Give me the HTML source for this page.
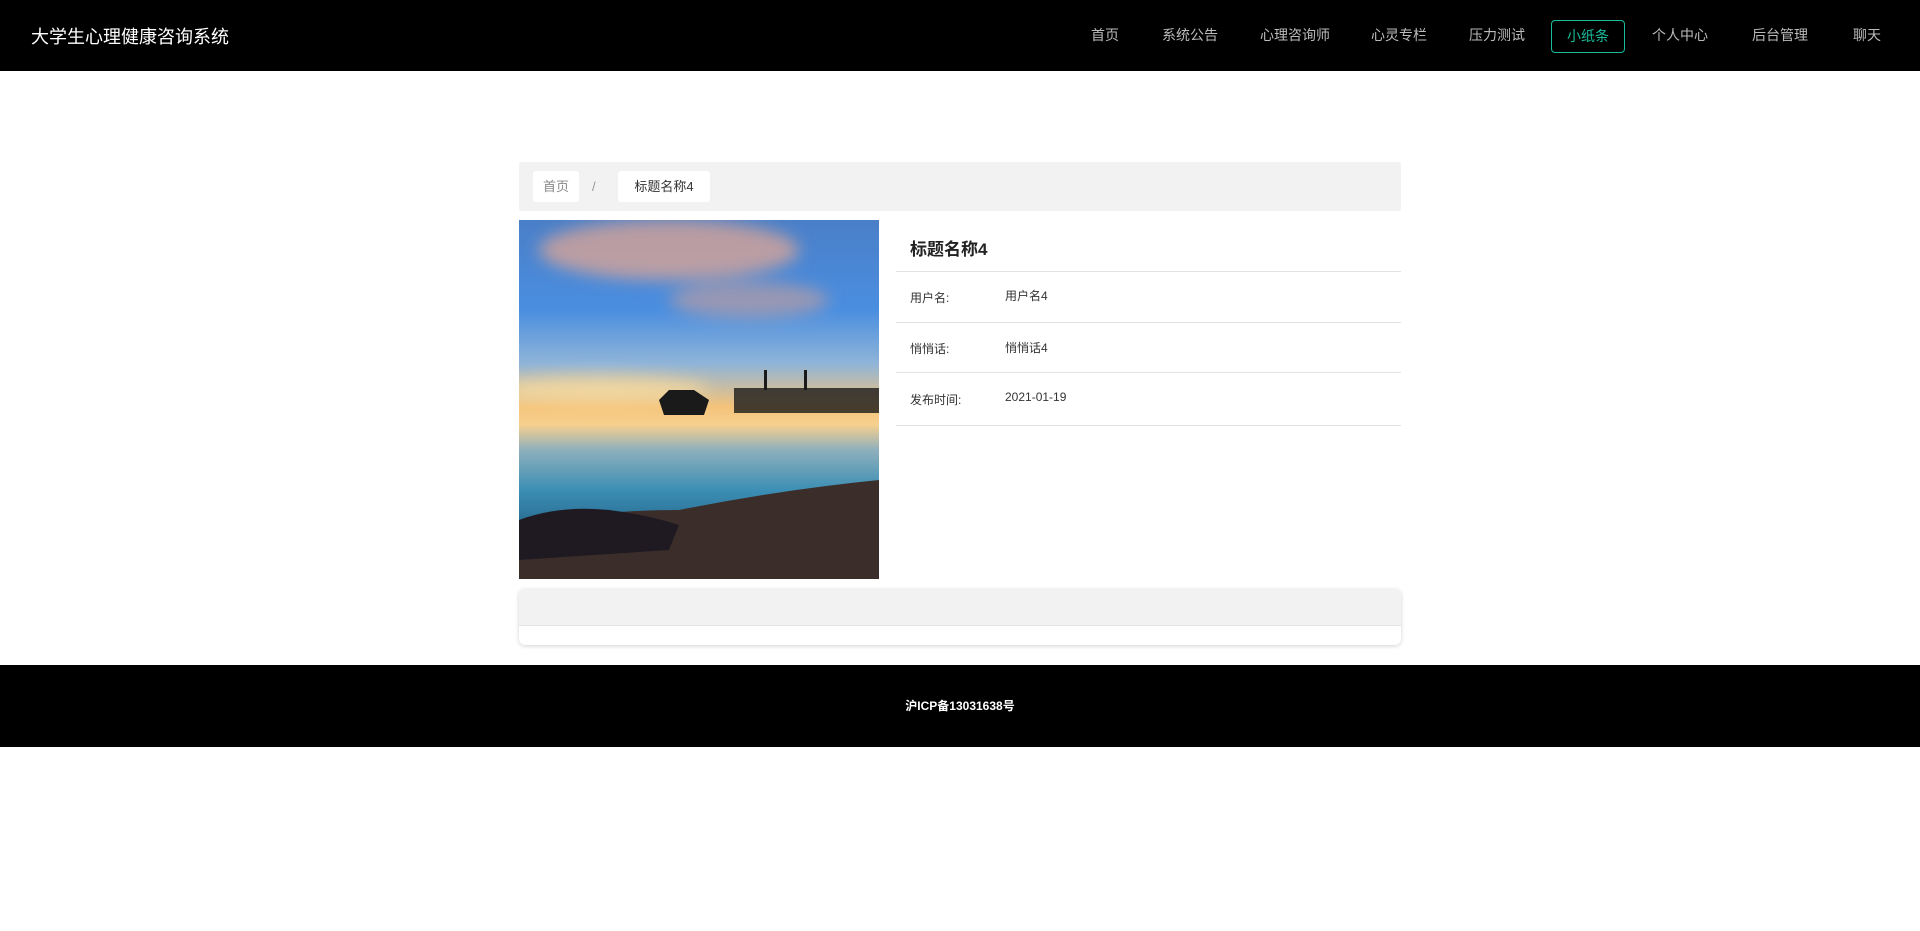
<!DOCTYPE html>
<html><head><meta charset="utf-8"><style>
*{margin:0;padding:0;box-sizing:border-box}
body{width:1920px;height:931px;background:#fff;font-family:"Liberation Sans","Noto Sans CJK SC",sans-serif;position:relative;overflow:hidden}
.nav{position:absolute;left:0;top:0;width:1920px;height:71px;background:#000}
.logo{position:absolute;left:31px;top:23px;color:#fff;font-size:18px}
.ni{position:absolute;top:26px;color:#bbb;font-size:14px;line-height:18px}
.act{position:absolute;left:1551px;top:20px;width:74px;height:33px;border:1px solid #1abc9c;border-radius:4px;color:#1abc9c;font-size:14px;text-align:center;line-height:31px}
.bc{position:absolute;left:519px;top:162px;width:882px;height:49px;background:#f2f2f2;border-radius:2px}
.pill{position:absolute;top:9px;height:31px;background:#fff;border-radius:3px;font-size:13px;line-height:31px;text-align:center}
.img{position:absolute;left:519px;top:220px;width:360px;height:359px;overflow:hidden;background:linear-gradient(180deg,#4a7fc8 0%,#4a8ee0 25%,#8fb4d8 40%,#f4c37a 52%,#f7d08e 57%,#8fb0bc 64%,#3d8fb5 75%,#2a6f95 84%,#3a3030 92%,#241b1a 100%)}
.row{position:absolute;left:896px;width:505px;border-bottom:1px solid #e2e2e2}
.lb{position:absolute;left:910px;font-size:12px;color:#333}
.vl{position:absolute;left:1005px;font-size:12px;color:#333}
.card{position:absolute;left:519px;top:589px;width:882px;height:56px;border-radius:6px;box-shadow:0 1px 4px rgba(0,0,0,.18);overflow:hidden;background:#fff}
.card div{height:37px;background:#f2f2f2;border-bottom:1px solid #e2e2e2}
.foot{position:absolute;left:0;top:665px;width:1920px;height:82px;background:#000;color:#fff;font-size:12px;font-weight:bold;text-align:center;line-height:82px}
</style></head><body>
<div class="nav">
<div class="logo">大学生心理健康咨询系统</div>
<div class="ni" style="left:1091px">首页</div>
<div class="ni" style="left:1162px">系统公告</div>
<div class="ni" style="left:1260px">心理咨询师</div>
<div class="ni" style="left:1371px">心灵专栏</div>
<div class="ni" style="left:1469px">压力测试</div>
<div class="act">小纸条</div>
<div class="ni" style="left:1652px">个人中心</div>
<div class="ni" style="left:1752px">后台管理</div>
<div class="ni" style="left:1853px">聊天</div>
</div>
<div class="bc">
<div class="pill" style="left:14px;width:46px;color:#888">首页</div>
<div style="position:absolute;left:73px;top:9px;line-height:31px;font-size:13px;color:#999">/</div>
<div class="pill" style="left:99px;width:92px;color:#333">标题名称4</div>
</div>
<div class="img">
<svg width="360" height="359" style="position:absolute;left:0;top:0">
<defs><filter id="b"><feGaussianBlur stdDeviation="8"/></filter></defs>
<g filter="url(#b)">
<ellipse cx="150" cy="30" rx="130" ry="30" fill="#e9a890" opacity=".7"/>
<ellipse cx="230" cy="80" rx="80" ry="18" fill="#e6a48c" opacity=".5"/>
<ellipse cx="80" cy="170" rx="110" ry="14" fill="#ffe0a0" opacity=".7"/>
</g>
<path d="M140 180 L150 170 L175 170 L190 180 L185 195 L145 195Z" fill="#1a1a1a"/>
<rect x="215" y="168" width="145" height="25" fill="#1a1a1a" opacity=".8"/>
<rect x="245" y="150" width="3" height="20" fill="#1a1a1a"/><rect x="285" y="150" width="3" height="20" fill="#1a1a1a"/>
<path d="M0 310 Q60 290 160 290 Q260 270 360 260 L360 359 L0 359Z" fill="#3b2e2a"/>
<path d="M0 300 Q40 285 90 290 Q130 295 160 305 L150 330 L0 340Z" fill="#1f1a22"/>
</svg>
</div>
<div style="position:absolute;left:910px;top:235px;font-size:17px;font-weight:bold;color:#222">标题名称4</div>
<div class="row" style="top:220px;height:52px"></div>
<div class="row" style="top:272px;height:51px"></div>
<div class="row" style="top:323px;height:50px"></div>
<div class="row" style="top:373px;height:53px"></div>
<div class="lb" style="top:289px">用户名:</div><div class="vl" style="top:287px">用户名4</div>
<div class="lb" style="top:340px">悄悄话:</div><div class="vl" style="top:339px">悄悄话4</div>
<div class="lb" style="top:391px">发布时间:</div><div class="vl" style="top:390px">2021-01-19</div>
<div class="card"><div></div></div>
<div class="foot">沪ICP备13031638号</div>
</body></html>
